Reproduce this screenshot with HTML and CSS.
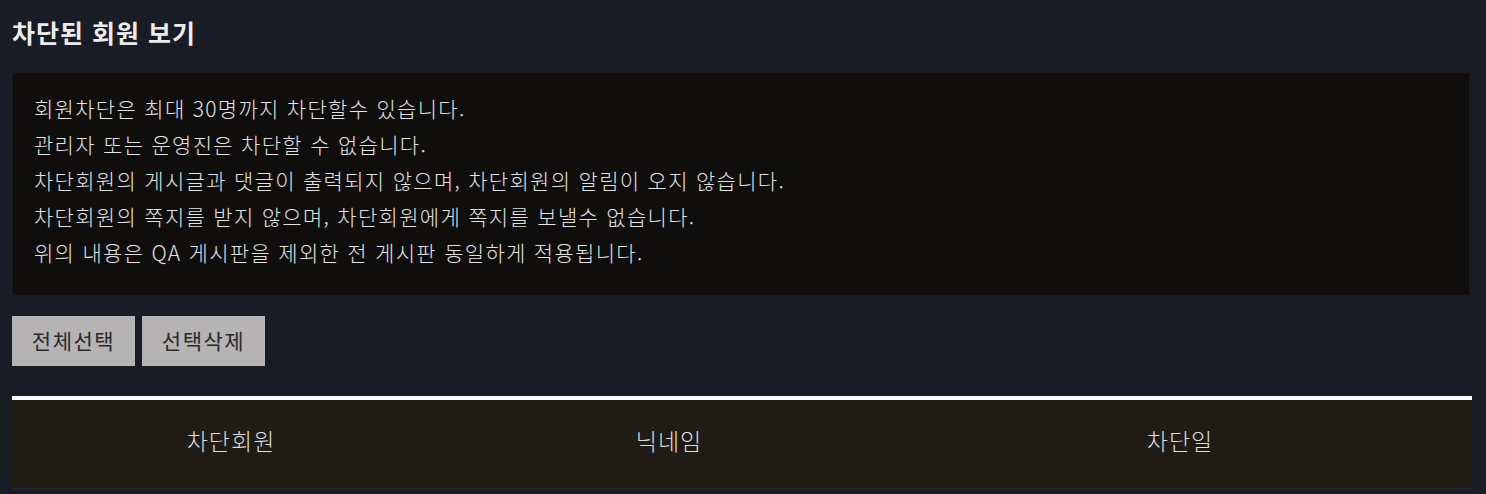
FILE: index.html
```html
<!DOCTYPE html>
<html lang="ko">
<head>
  <meta charset="UTF-8" />
  <meta name="viewport" content="width=device-width, initial-scale=1" />
  <title>차단된 회원 보기</title>
  <link rel="stylesheet" href="styles.css">
</head>
<body>
<main>
  <h2 class="page-title">차단된 회원 보기</h2>

  <div class="notice">
    <p>회원차단은 최대 30명까지 차단할수 있습니다.</p>
    <p>관리자 또는 운영진은 차단할 수 없습니다.</p>
    <p>차단회원의 게시글과 댓글이 출력되지 않으며, 차단회원의 알림이 오지 않습니다.</p>
    <p>차단회원의 쪽지를 받지 않으며, 차단회원에게 쪽지를 보낼수 없습니다.</p>
    <p>위의 내용은 QA 게시판을 제외한 전 게시판 동일하게 적용됩니다.</p>
  </div>

  <div class="actions">
    <button type="button" class="btn">전체선택</button>
    <button type="button" class="btn">선택삭제</button>
  </div>

  <table class="block-list">
    <thead>
      <tr>
        <th class="col-member">차단회원</th>
        <th class="col-nick">닉네임</th>
        <th class="col-date">차단일</th>
      </tr>
    </thead>
  </table>
</main>
</body>
</html>
```

FILE: styles.css
```css
body {
  font-family: "Noto Sans CJK KR", "Noto Sans", sans-serif;
  background: #191c25;
  color: #e4e4e4;
  margin: 0;
  padding: 0 14px 0 12px;
}
.page-title {
  margin: 0;
  padding: 14px 0 22px;
  font-size: 25px;
  line-height: 36px;
  letter-spacing: 1px;
  font-weight: 700;
  color: #ececec;
}
.notice {
  background: #0f0e0c;
  border: 1px solid #1c1a17;
  padding: 17px 21px 25px;
  margin-right: 2px;
}
.notice p {
  margin: 0;
  font-size: 21px;
  line-height: 36px;
  letter-spacing: 1.3px;
  font-weight: 300;
  color: #e2e2e2;
}
.actions {
  display: flex;
  gap: 7px;
  margin-top: 20px;
}
.btn {
  width: 123px;
  height: 50px;
  background: #b5b3b4;
  border: none;
  color: #2a2a2a;
  font-family: inherit;
  font-size: 21px;
  letter-spacing: 1.5px;
  padding: 0 0 2px;
  cursor: pointer;
}
.block-list {
  width: 100%;
  margin-top: 30px;
  border-collapse: collapse;
  border-top: 4px solid #fff;
  border-bottom: 2px solid #2b2520;
  background: #1f1c16;
}
.block-list th {
  height: 80px;
  font-size: 23px;
  font-weight: 300;
  letter-spacing: 1px;
  color: #dedede;
  text-align: center;
  padding: 0 0 8px;
}
.col-member { width: 30%; }
.col-nick { width: 30%; }
.col-date { width: 40%; }
```
